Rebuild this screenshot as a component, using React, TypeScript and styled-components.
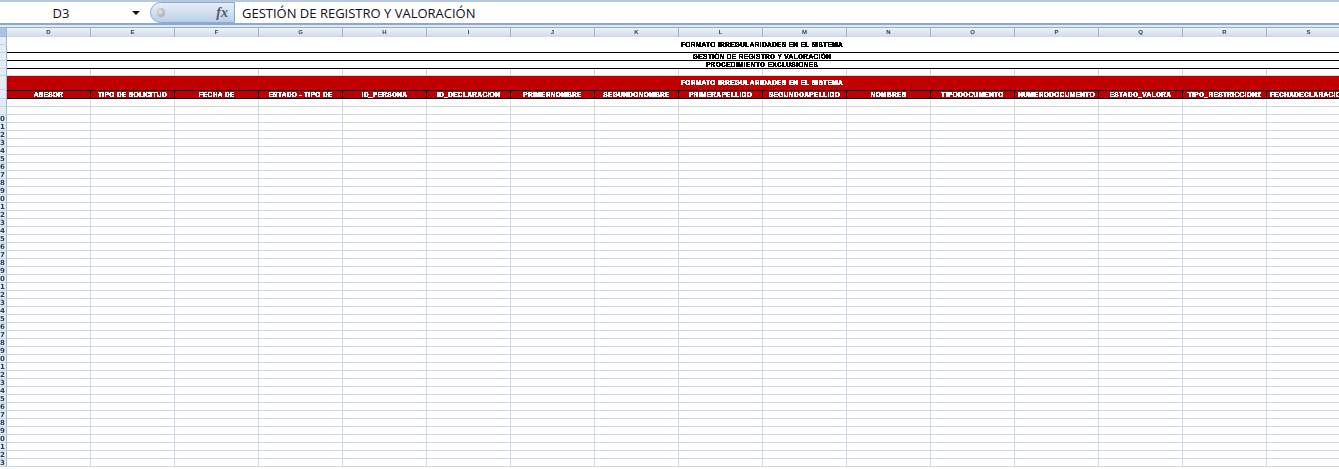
import React from "react";
import styled, { createGlobalStyle } from "styled-components";

const Global = createGlobalStyle`
  html, body { margin: 0; padding: 0; background: #fff; }
  body { overflow: hidden; }
`;

const COLS = "DEFGHIJKLMNOPQRS".split("");
const HEADERS = [
  "ASESOR", "TIPO DE SOLICITUD", "FECHA DE", "ESTADO - TIPO DE", "ID_PERSONA", "ID_DECLARACION",
  "PRIMERNOMBRE", "SEGUNDONOMBRE", "PRIMERAPELLIDO", "SEGUNDOAPELLIDO", "NOMBRES", "TIPODOCUMENTO",
  "NUMERODOCUMENTO", "ESTADO_VALORA", "TIPO_RESTRICCION2", "FECHADECLARACION",
];
const BODY_ROWS = Array.from({ length: 46 }, (_, i) => i);

const Page = styled.div`
  width: 1339px;
  height: 469px;
  overflow: hidden;
  display: flex;
  flex-direction: column;
  background: #fff;
`;

const FormulaBar = styled.div`
  flex: none;
  height: 25px;
  box-sizing: border-box;
  display: flex;
  background: #fff;
  border-top: 2px solid #b3c8e3;
  padding-top: 1px;
  border-bottom: 2px solid #8fa9c6;
`;

const NameBox = styled.div`
  flex: none;
  width: 122px;
  text-align: center;
  font: 13px/20px "Open Sans", sans-serif;
  color: #111;
`;

const NameArrow = styled.div`
  flex: none;
  width: 28px;
  display: flex;
  align-items: center;
  justify-content: center;
  &::after {
    content: "";
    border-left: 4px solid transparent;
    border-right: 4px solid transparent;
    border-top: 4px solid #111;
  }
`;

const Pill = styled.div`
  flex: none;
  width: 85px;
  box-sizing: border-box;
  margin-top: -1px;
  display: flex;
  align-items: center;
  justify-content: space-between;
  padding: 0 6px 0 6px;
  border-radius: 12px 0 0 12px;
  border: 1px solid #8fa9c6;
  background: linear-gradient(180deg, #e6eef8 0%, #d4e1f1 45%, #b9cfe9 100%);
`;

const PillKnob = styled.div`
  width: 8px;
  height: 9px;
  border-radius: 50%;
  background: radial-gradient(circle at 40% 40%, #e8e8e8 0%, #a0a0a0 85%);
`;

const Fx = styled.span`
  font: italic bold 14px/18px "Liberation Serif", serif;
  color: #4f5b68;
`;

const FormulaText = styled.div`
  flex: 1;
  padding-left: 7px;
  font: 13px/20px "Open Sans", sans-serif;
  color: #111;
  white-space: nowrap;
`;

const Gutter = styled.div`
  flex: none;
  height: 3px;
  box-sizing: border-box;
  background: #dfe8f4;
  border-bottom: 1px solid #8db0d6;
`;

const Sheet = styled.div`
  flex: none;
  width: 1517px;
  display: grid;
  grid-template-columns: 7px 1fr;
`;

const Corner = styled.div`
  background: #a8c4e8;
  border-right: 1px solid #9eb6ce;
  border-bottom: 1px solid #9eb6ce;
  box-sizing: border-box;
  height: 9px;
`;

const ColumnHeaders = styled.div`
  display: grid;
  grid-template-columns: repeat(16, 84px);
`;

const ColumnHeader = styled.div`
  height: 9px;
  box-sizing: border-box;
  border-right: 1px solid #9eb6ce;
  background: linear-gradient(180deg, #eef2f8 0%, #dde5ef 55%, #cfd9e6 100%);
  font: bold 6px/9px "Liberation Sans", sans-serif;
  color: #1f4452;
  text-align: center;
  filter: url(#crisp);
`;

const RowHeader = styled.div<{ $h: number }>`
  height: ${(p) => p.$h}px;
  box-sizing: border-box;
  background: #e4ecf7;
  border-right: 1px solid #9eb6ce;
  border-bottom: 1px solid #c5d3e6;
  font: bold 7px/${(p) => p.$h}px "DejaVu Sans", sans-serif;
  color: #1f3d4e;
  text-align: left;
  overflow: hidden;
  filter: url(#crisp);
`;

const TitleCell = styled.div<{ $h: number; $span?: number }>`
  height: ${(p) => p.$h}px;
  grid-row: span ${(p) => p.$span ?? 1};
  box-sizing: border-box;
  background: #fff;
  border-bottom: 1px solid #000;
`;

const BannerCell = styled.div`
  height: 14px;
  background: #c00000;
`;

const SheetText = styled.span<{ $light?: boolean; $lh: number; $left?: boolean }>`
  display: block;
  text-align: ${(p) => (p.$left ? "left" : "center")};
  font: bold 6.5px/${(p) => p.$lh}px "Liberation Sans", sans-serif;
  -webkit-text-stroke: 0.3px currentColor;
  letter-spacing: 0.36px;
  white-space: nowrap;
  color: ${(p) => (p.$light ? "#fff" : "#000")};
  filter: url(#crisp);
`;

const GridRow = styled.div`
  display: grid;
  grid-template-columns: repeat(16, 84px);
`;

const GridCell = styled.div<{ $h: number }>`
  height: ${(p) => p.$h}px;
  box-sizing: border-box;
  border-right: 1px solid #d0d7e5;
  border-bottom: 1px solid #d0d7e5;
`;

const HeadBlock = styled.div`
  border-top: 1px solid #000;
`;

const HeadCell = styled.div<{ $left?: boolean }>`
  height: 8px;
  box-sizing: border-box;
  overflow: hidden;
  background: #c00000;
  border-right: 1px solid #000;
  border-bottom: 1px solid #000;
  padding-left: ${(p) => (p.$left ? "3px" : "0")};
`;

const Defs = styled.svg`
  position: absolute;
  width: 0;
  height: 0;
`;

const EmptyRow = ({ h = 8 }: { h?: number }) => (
  <GridRow>
    {COLS.map((c) => (
      <GridCell key={c} $h={h} />
    ))}
  </GridRow>
);

export default function App() {
  return (
    <Page>
      <Global />
      <Defs aria-hidden="true">
        <filter id="crisp" x="-5%" y="-20%" width="110%" height="140%" colorInterpolationFilters="sRGB">
          <feComponentTransfer>
            <feFuncA type="discrete" tableValues="0 0 1 1 1" />
          </feComponentTransfer>
        </filter>
      </Defs>
      <FormulaBar>
        <NameBox>D3</NameBox>
        <NameArrow />
        <Pill>
          <PillKnob />
          <Fx>fx</Fx>
        </Pill>
        <FormulaText>GESTIÓN DE REGISTRO Y VALORACIÓN</FormulaText>
      </FormulaBar>
      <Gutter />
      <Sheet>
        <Corner />
        <ColumnHeaders>
          {COLS.map((c) => (
            <ColumnHeader key={c}>{c}</ColumnHeader>
          ))}
        </ColumnHeaders>

        <RowHeader $h={8} />
        <TitleCell $h={16} $span={2}>
          <SheetText $lh={15}>FORMATO IRREGULARIDADES EN EL SISTEMA</SheetText>
        </TitleCell>
        <RowHeader $h={8} />
        <RowHeader $h={8} />
        <TitleCell $h={8}>
          <SheetText $lh={8}>GESTIÓN DE REGISTRO Y VALORACIÓN</SheetText>
        </TitleCell>
        <RowHeader $h={8} />
        <TitleCell $h={8}>
          <SheetText $lh={8}>PROCEDIMIENTO EXCLUSIONES</SheetText>
        </TitleCell>
        <RowHeader $h={7} />
        <EmptyRow h={7} />
        <RowHeader $h={14} />
        <BannerCell>
          <SheetText $light $lh={14}>FORMATO IRREGULARIDADES EN EL SISTEMA</SheetText>
        </BannerCell>
        <RowHeader $h={9} />
        <HeadBlock>
          <GridRow>
            {HEADERS.map((h, i) => (
              <HeadCell key={h} $left={i === HEADERS.length - 1}>
                <SheetText $light $lh={7} $left={i === HEADERS.length - 1}>{h}</SheetText>
              </HeadCell>
            ))}
          </GridRow>
        </HeadBlock>

        {BODY_ROWS.map((i) => (
          <React.Fragment key={i}>
            <RowHeader $h={8}>{i >= 2 ? (i - 2) % 10 : ""}</RowHeader>
            <EmptyRow />
          </React.Fragment>
        ))}
      </Sheet>
    </Page>
  );
}
